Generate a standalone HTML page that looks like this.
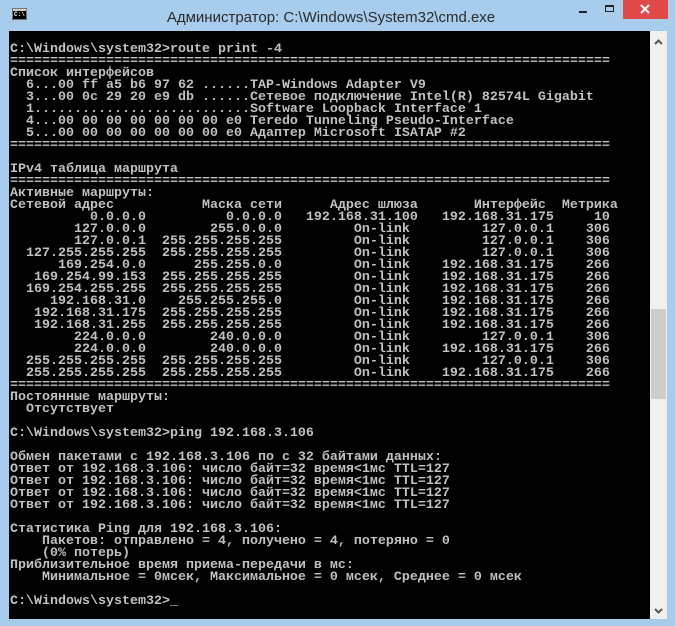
<!DOCTYPE html>
<html><head><meta charset="utf-8">
<style>
html,body{margin:0;padding:0;}
body{width:675px;height:626px;background:#a8cdec;position:relative;overflow:hidden;}
#title{position:absolute;left:0;top:0;width:675px;height:31px;font-family:"Liberation Sans",sans-serif;font-size:15px;color:#2b2b2b;}
#title .t{position:absolute;left:0;width:662px;text-align:center;top:9px;}
#icon{position:absolute;left:12px;top:8px;width:15px;height:12px;background:#000;border:1px solid #777;box-sizing:border-box;}
#icon:before{content:"";position:absolute;left:0;top:0;right:0;height:2px;background:#ccc;}
#icon span{position:absolute;left:1px;top:2px;color:#fff;font:bold 6px "Liberation Mono",monospace;}
#close{position:absolute;left:623px;top:0;width:45px;height:19px;background:#e04a4b;}
#console{position:absolute;left:9px;top:31px;width:641px;height:588px;background:#000;}
#sb{position:absolute;left:650px;top:31px;width:17px;height:588px;background:#f0f0f0;}
#thumb{position:absolute;left:1px;top:278px;width:15px;height:90px;background:#cdcdcd;}
pre{position:absolute;left:10px;top:44px;margin:0;font-family:"Liberation Mono","DejaVu Sans Mono",monospace;font-size:13.33px;font-weight:bold;line-height:12px;color:#c0c0c0;white-space:pre;}
</style></head><body>
<div id="title"><div id="icon"><span>C:\</span></div><div class="t">Администратор: C:\Windows\System32\cmd.exe</div>
<div style="position:absolute;left:579px;top:11px;width:8px;height:2px;background:#222"></div>
<div style="position:absolute;left:605px;top:5px;width:9px;height:7px;border:1px solid #222;border-top-width:2px;box-sizing:border-box"></div>
<div id="close"><svg width="45" height="19"><path d="M18 5 L26 13 M26 5 L18 13" stroke="#fff" stroke-width="2"/></svg></div>
</div>
<div id="console"></div>
<div id="sb"><svg style="position:absolute;left:4px;top:8px" width="9" height="6"><path d="M1 5 L4.5 1.5 L8 5" stroke="#555" stroke-width="2" fill="none"/></svg><div id="thumb"></div><svg style="position:absolute;left:4px;top:577px" width="9" height="6"><path d="M1 1 L4.5 4.5 L8 1" stroke="#555" stroke-width="2" fill="none"/></svg></div>
<pre>C:\Windows\system32&gt;route print -4
===========================================================================
Список интерфейсов
  6...00 ff a5 b6 97 62 ......TAP-Windows Adapter V9
  3...00 0c 29 20 e9 db ......Сетевое подключение Intel(R) 82574L Gigabit
  1...........................Software Loopback Interface 1
  4...00 00 00 00 00 00 00 e0 Teredo Tunneling Pseudo-Interface
  5...00 00 00 00 00 00 00 e0 Адаптер Microsoft ISATAP #2
===========================================================================

IPv4 таблица маршрута
===========================================================================
Активные маршруты:
Сетевой адрес           Маска сети      Адрес шлюза       Интерфейс  Метрика
          0.0.0.0          0.0.0.0   192.168.31.100   192.168.31.175     10
        127.0.0.0        255.0.0.0         On-link         127.0.0.1    306
        127.0.0.1  255.255.255.255         On-link         127.0.0.1    306
  127.255.255.255  255.255.255.255         On-link         127.0.0.1    306
      169.254.0.0      255.255.0.0         On-link    192.168.31.175    266
   169.254.99.153  255.255.255.255         On-link    192.168.31.175    266
  169.254.255.255  255.255.255.255         On-link    192.168.31.175    266
     192.168.31.0    255.255.255.0         On-link    192.168.31.175    266
   192.168.31.175  255.255.255.255         On-link    192.168.31.175    266
   192.168.31.255  255.255.255.255         On-link    192.168.31.175    266
        224.0.0.0        240.0.0.0         On-link         127.0.0.1    306
        224.0.0.0        240.0.0.0         On-link    192.168.31.175    266
  255.255.255.255  255.255.255.255         On-link         127.0.0.1    306
  255.255.255.255  255.255.255.255         On-link    192.168.31.175    266
===========================================================================
Постоянные маршруты:
  Отсутствует

C:\Windows\system32&gt;ping 192.168.3.106

Обмен пакетами с 192.168.3.106 по с 32 байтами данных:
Ответ от 192.168.3.106: число байт=32 время&lt;1мс TTL=127
Ответ от 192.168.3.106: число байт=32 время&lt;1мс TTL=127
Ответ от 192.168.3.106: число байт=32 время&lt;1мс TTL=127
Ответ от 192.168.3.106: число байт=32 время&lt;1мс TTL=127

Статистика Ping для 192.168.3.106:
    Пакетов: отправлено = 4, получено = 4, потеряно = 0
    (0% потерь)
Приблизительное время приема-передачи в мс:
    Минимальное = 0мсек, Максимальное = 0 мсек, Среднее = 0 мсек

C:\Windows\system32&gt;_</pre>
</body></html>
